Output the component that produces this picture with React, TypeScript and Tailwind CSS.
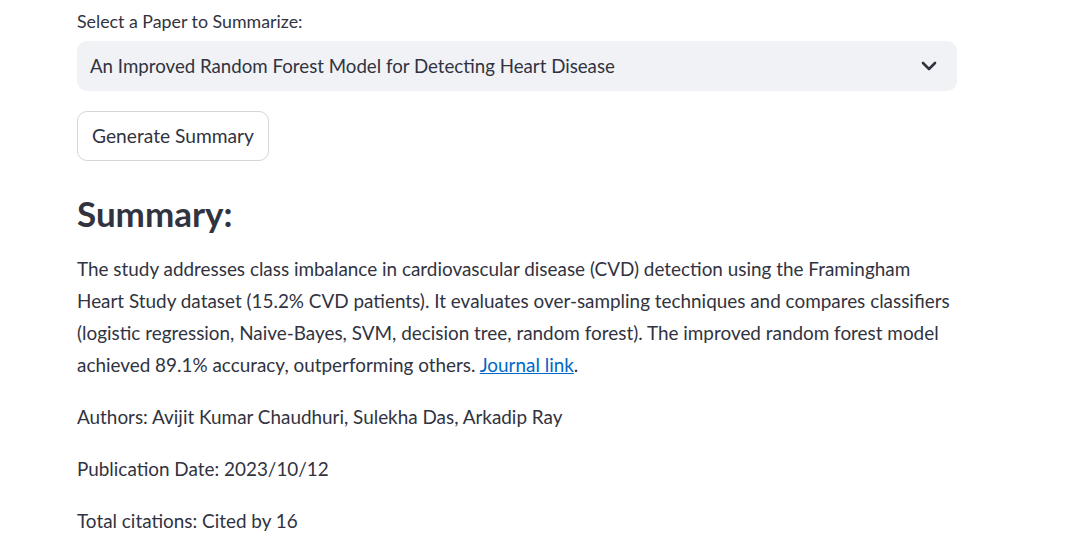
import { ChevronDown } from "lucide-react";

const font = { fontFamily: "Lato, 'Open Sans', sans-serif" };

export default function App() {
  return (
    <div className="min-h-screen w-full bg-white text-[#31333f]" style={font}>
      <div className="w-[880px] ml-[77px] pt-[8px]">
        <div className="h-[26px] leading-[26px] text-[17.8px]">
          Select a Paper to Summarize:
        </div>
        <div className="mt-[7px] h-[50px] rounded-[10px] bg-[#f0f2f6] pl-[13px] pr-[16px] flex flex-row items-center">
          <span className="flex-1 text-[18.7px]">
            An Improved Random Forest Model for Detecting Heart Disease
          </span>
          <ChevronDown size={24} strokeWidth={2.6} />
        </div>
        <button className="mt-[20px] h-[50px] w-[192px] rounded-[10px] border border-[#d6d6d9] bg-white text-[19.2px]">
          Generate Summary
        </button>
        <h3 className="mt-[30px] h-[44px] leading-[44px] text-[35px] font-bold">
          Summary:
        </h3>
        <p className="mt-[18px] w-[940px] whitespace-nowrap text-[18.9px] leading-[32px]">
          The study addresses class imbalance in cardiovascular disease (CVD)
          detection using the Framingham
          <br />
          Heart Study dataset (15.2% CVD patients). It evaluates over-sampling
          techniques and compares classifiers
          <br />
          (logistic regression, Naive-Bayes, SVM, decision tree, random
          forest). The improved random forest model
          <br />
          achieved 89.1% accuracy, outperforming others.{" "}
          <a href="#" className="text-[#0068c9] underline">
            Journal link
          </a>
          .
        </p>
        <p className="mt-[20px] text-[18.9px] leading-[32px]">
          Authors: Avijit Kumar Chaudhuri, Sulekha Das, Arkadip Ray
        </p>
        <p className="mt-[20px] text-[18.9px] leading-[32px]">
          Publication Date: 2023/10/12
        </p>
        <p className="mt-[20px] text-[18.9px] leading-[32px]">
          Total citations: Cited by 16
        </p>
      </div>
    </div>
  );
}
